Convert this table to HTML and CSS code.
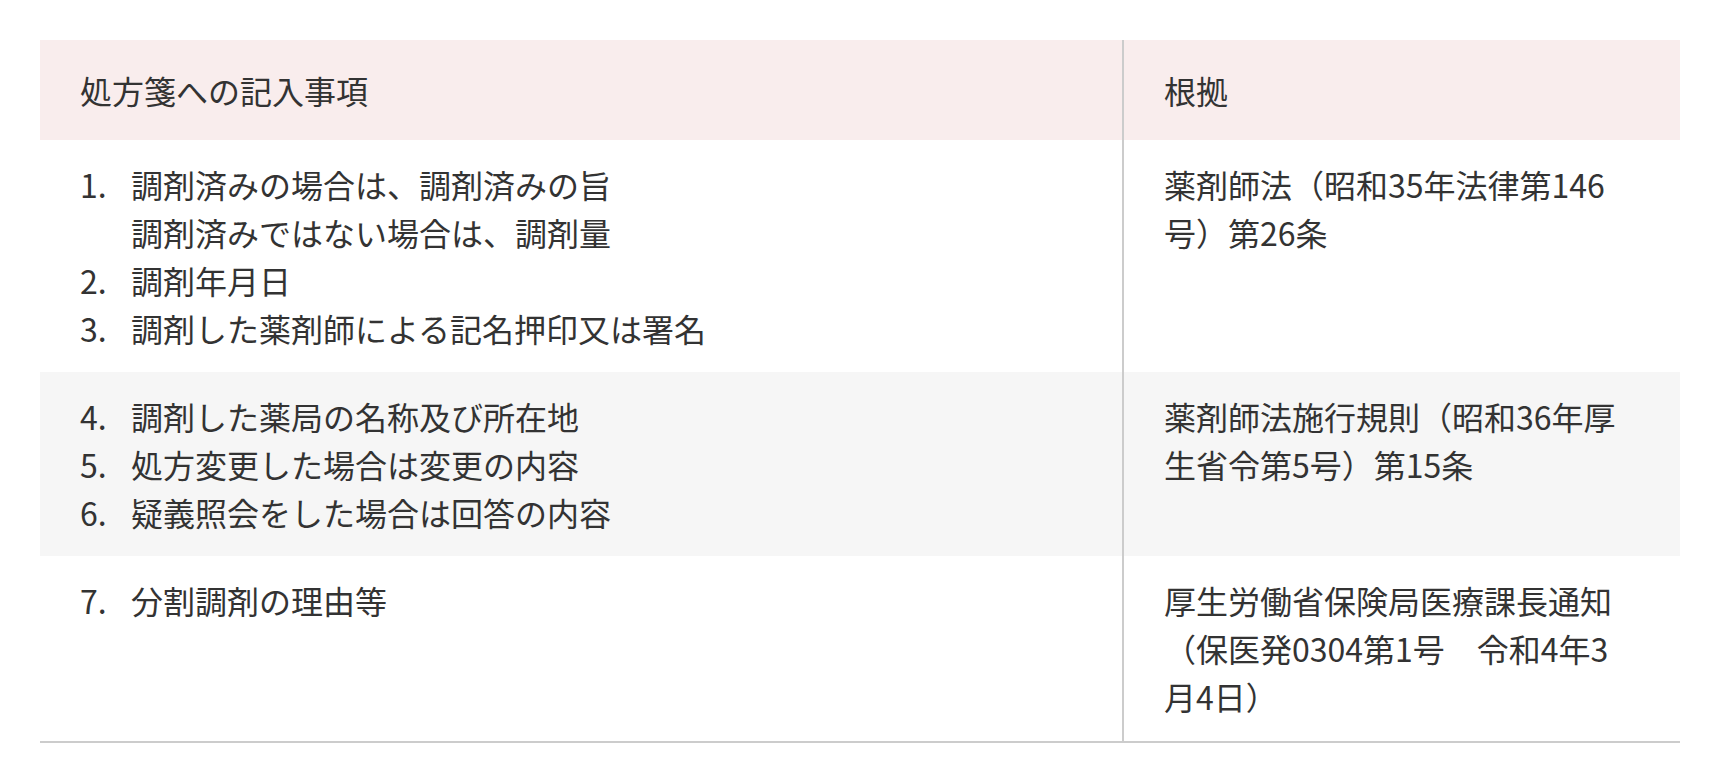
FILE: index.html
```html
<!DOCTYPE html>
<html lang="ja">
<head>
<meta charset="utf-8">
<title>処方箋への記入事項</title>
<link rel="stylesheet" href="styles.css">
</head>
<body>
<div class="page">
  <div class="table">
    <div class="row head">
      <div class="cell main">処方箋への記入事項</div>
      <div class="cell basis">根拠</div>
    </div>
    <div class="row">
      <div class="cell main">
        <ol class="list">
          <li><span class="num">1.</span><span class="txt">調剤済みの場合は、調剤済みの旨<br>調剤済みではない場合は、調剤量</span></li>
          <li><span class="num">2.</span><span class="txt">調剤年月日</span></li>
          <li><span class="num">3.</span><span class="txt">調剤した薬剤師による記名押印又は署名</span></li>
        </ol>
      </div>
      <div class="cell basis">薬剤師法（昭和35年法律第146号）第26条</div>
    </div>
    <div class="row alt">
      <div class="cell main">
        <ol class="list">
          <li><span class="num">4.</span><span class="txt">調剤した薬局の名称及び所在地</span></li>
          <li><span class="num">5.</span><span class="txt">処方変更した場合は変更の内容</span></li>
          <li><span class="num">6.</span><span class="txt">疑義照会をした場合は回答の内容</span></li>
        </ol>
      </div>
      <div class="cell basis">薬剤師法施行規則（昭和36年厚生省令第5号）第15条</div>
    </div>
    <div class="row last">
      <div class="cell main">
        <ol class="list">
          <li><span class="num">7.</span><span class="txt">分割調剤の理由等</span></li>
        </ol>
      </div>
      <div class="cell basis">厚生労働省保険局医療課長通知（保医発0304第1号　令和4年3月4日）</div>
    </div>
  </div>
</div>
</body>
</html>
```
FILE: styles.css
```css
html, body {
  margin: 0;
  padding: 0;
  background: #ffffff;
}

body {
  font-family: "Noto Sans CJK JP", "Noto Sans", sans-serif;
  font-size: 32px;
  line-height: 48px;
  color: #333333;
}

.page {
  padding: 40px;
}

.table {
  width: 1640px;
  border-bottom: 2px solid #cccccc;
}

.row {
  display: grid;
  grid-template-columns: 1082px 1fr;
}

.row.head {
  background: #f9eded;
}

.row.alt {
  background: #f6f6f6;
}

.cell {
  padding: 20px 40px;
}

.row.head .cell {
  padding-top: 26px;
  padding-bottom: 26px;
}

.row.last .cell {
  padding-bottom: 21px;
}

.cell.basis {
  border-left: 2px solid #cccccc;
  padding-right: 56px;
}

.list {
  list-style: none;
  margin: 0;
  padding: 0;
}

.list li {
  display: flex;
}

.num {
  flex: 0 0 51px;
}

.txt {
  flex: 1 1 auto;
}
```
